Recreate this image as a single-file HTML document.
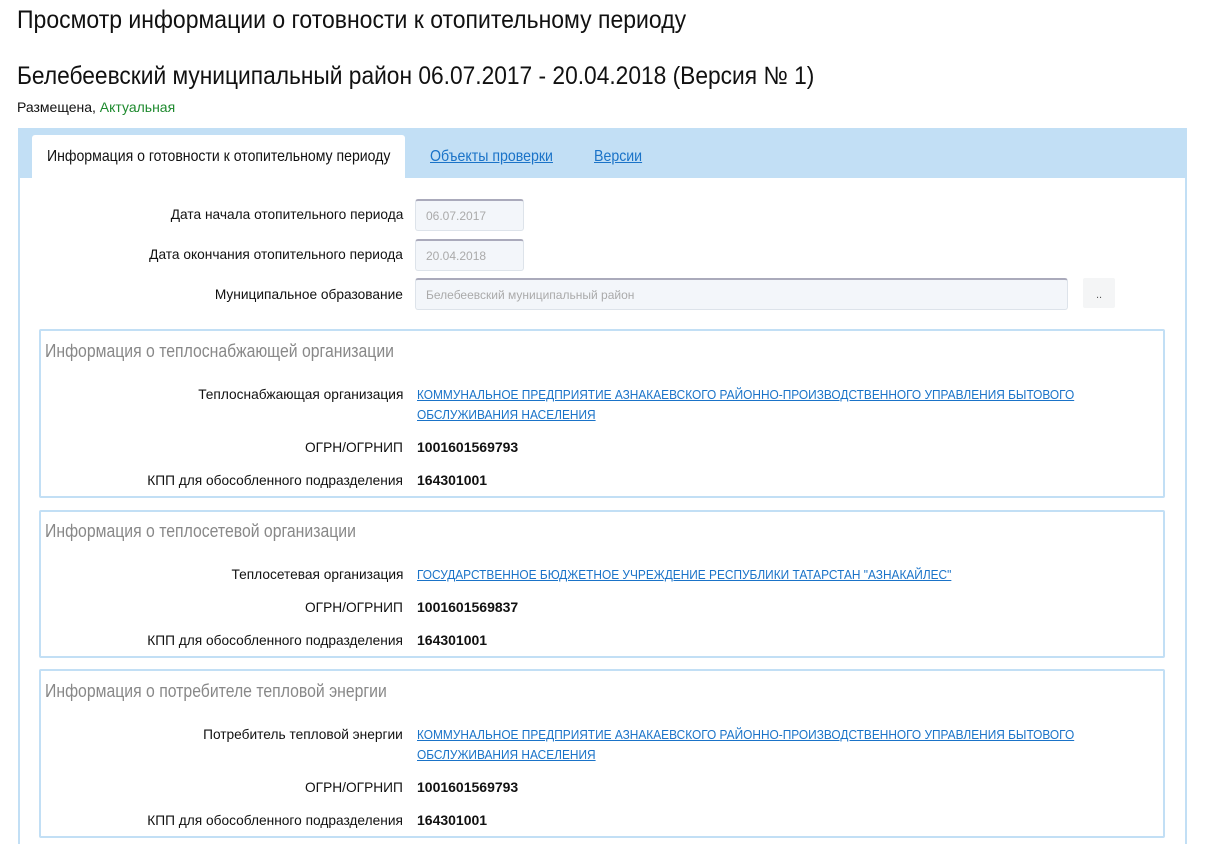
<!DOCTYPE html>
<html style="overflow:hidden;height:844px"><head><meta charset="utf-8"><style>
*{box-sizing:border-box;margin:0;padding:0}
body{width:1207px;height:844px;overflow:hidden;background:#fff;font-family:"Liberation Sans",sans-serif;color:#111;position:relative}
.a{position:absolute;white-space:nowrap}
.sx{transform-origin:left top}
h1{position:absolute;left:17px;top:6px;font-size:25px;font-weight:normal;white-space:nowrap;transform:scaleX(0.92);transform-origin:left top}
h2{position:absolute;left:17px;top:62px;font-size:25px;font-weight:normal;white-space:nowrap;transform:scaleX(0.91);transform-origin:left top}
.st{left:17px;top:99px;font-size:14px}
.wrap{position:absolute;left:18px;top:128px;width:1169px;height:716px;background:#fff;border:2px solid #c2dff5;border-top:none;border-bottom:none}
.bar{position:absolute;left:18px;top:128px;width:1169px;height:50px;background:#c2dff5}
.tab{position:absolute;left:32px;top:135px;width:373px;height:44px;background:#fff;border-radius:3px 3px 0 0}
.lnk{color:#1a73c8;text-decoration:underline}
.lbl{font-size:14px;text-align:right;right:804px;transform:scaleX(0.98);transform-origin:right top}
.inp{position:absolute;background:#f3f6fa;border:1px solid #dde3ea;border-top:2px solid #aab;border-radius:3px;font-size:12px;color:#aaa;padding:8px 10px}
.box{position:absolute;left:39px;width:1126px;border:2px solid #c2dff5;border-radius:2px}
.tt{font-size:18px;color:#888;left:45px;transform:scaleX(0.877);transform-origin:left top}
.v{font-weight:bold;left:417px;font-size:14px}
.ln{left:417px;font-size:13px;color:#1a73c8;text-decoration:underline;line-height:20px;transform:scaleX(0.914);transform-origin:left top}
</style></head><body>
<h1>Просмотр информации о готовности к отопительному периоду</h1>
<h2>Белебеевский муниципальный район 06.07.2017 - 20.04.2018 (Версия № 1)</h2>
<div class="a st">Размещена, <span style="color:#1e8a2e">Актуальная</span></div>
<div class="wrap"></div>
<div class="bar"></div>
<div class="tab"></div>
<div class="a sx" style="left:47px;top:148px;font-size:16px;transform:scaleX(0.88)">Информация о готовности к отопительному периоду</div>
<div class="a lnk sx" style="left:430px;top:148px;font-size:16px;transform:scaleX(0.885)">Объекты проверки</div>
<div class="a lnk sx" style="left:594px;top:148px;font-size:16px;transform:scaleX(0.885)">Версии</div>

<div class="a lbl" style="top:206px">Дата начала отопительного периода</div>
<div class="inp" style="left:415px;top:199px;width:109px;height:32px">06.07.2017</div>
<div class="a lbl" style="top:246px">Дата окончания отопительного периода</div>
<div class="inp" style="left:415px;top:239px;width:109px;height:32px">20.04.2018</div>
<div class="a lbl" style="top:286px">Муниципальное образование</div>
<div class="inp" style="left:415px;top:278px;width:653px;height:32px">Белебеевский муниципальный район</div>
<div class="a" style="left:1083px;top:278px;width:32px;height:30px;background:#f4f5f6;border-radius:2px;font-size:11px;text-align:center;line-height:34px;color:#555">..</div>

<div class="box" style="top:329px;height:169px"></div>
<div class="a tt" style="top:341px">Информация о теплоснабжающей организации</div>
<div class="a lbl" style="top:386px">Теплоснабжающая организация</div>
<div class="a ln" style="top:385px">КОММУНАЛЬНОЕ ПРЕДПРИЯТИЕ АЗНАКАЕВСКОГО РАЙОННО-ПРОИЗВОДСТВЕННОГО УПРАВЛЕНИЯ БЫТОВОГО<br>ОБСЛУЖИВАНИЯ НАСЕЛЕНИЯ</div>
<div class="a lbl" style="top:439px">ОГРН/ОГРНИП</div>
<div class="a v" style="top:439px">1001601569793</div>
<div class="a lbl" style="top:472px">КПП для обособленного подразделения</div>
<div class="a v" style="top:472px">164301001</div>

<div class="box" style="top:510px;height:148px"></div>
<div class="a tt" style="top:521px">Информация о теплосетевой организации</div>
<div class="a lbl" style="top:566px">Теплосетевая организация</div>
<div class="a ln" style="top:565px">ГОСУДАРСТВЕННОЕ БЮДЖЕТНОЕ УЧРЕЖДЕНИЕ РЕСПУБЛИКИ ТАТАРСТАН "АЗНАКАЙЛЕС"</div>
<div class="a lbl" style="top:599px">ОГРН/ОГРНИП</div>
<div class="a v" style="top:599px">1001601569837</div>
<div class="a lbl" style="top:632px">КПП для обособленного подразделения</div>
<div class="a v" style="top:632px">164301001</div>

<div class="box" style="top:669px;height:169px"></div>
<div class="a tt" style="top:681px">Информация о потребителе тепловой энергии</div>
<div class="a lbl" style="top:726px">Потребитель тепловой энергии</div>
<div class="a ln" style="top:725px">КОММУНАЛЬНОЕ ПРЕДПРИЯТИЕ АЗНАКАЕВСКОГО РАЙОННО-ПРОИЗВОДСТВЕННОГО УПРАВЛЕНИЯ БЫТОВОГО<br>ОБСЛУЖИВАНИЯ НАСЕЛЕНИЯ</div>
<div class="a lbl" style="top:779px">ОГРН/ОГРНИП</div>
<div class="a v" style="top:779px">1001601569793</div>
<div class="a lbl" style="top:812px">КПП для обособленного подразделения</div>
<div class="a v" style="top:812px">164301001</div>
</body></html>
